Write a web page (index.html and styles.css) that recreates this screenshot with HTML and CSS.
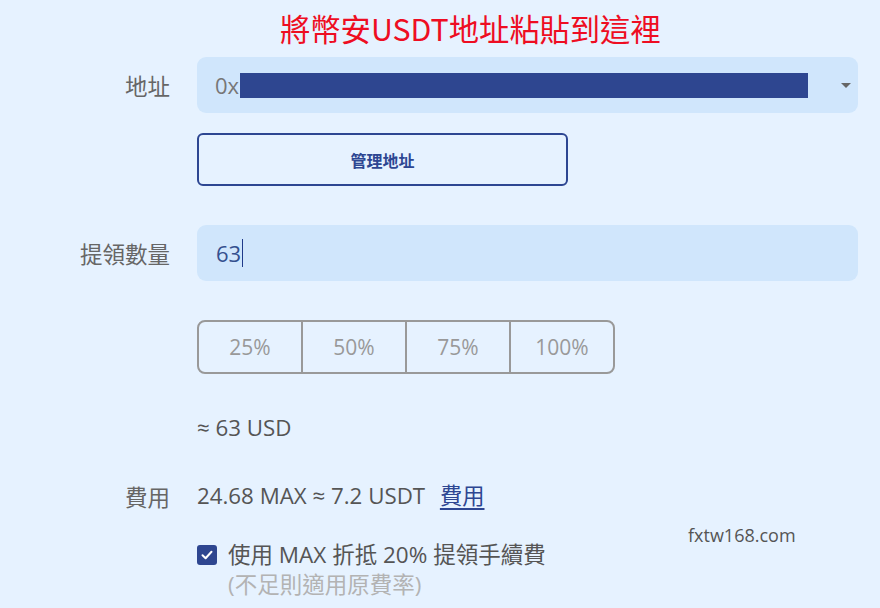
FILE: index.html
```html
<!DOCTYPE html>
<html lang="zh-Hant">
<head>
    <meta charset="UTF-8">
    <meta name="viewport" content="width=device-width, initial-scale=1.0">
    <link rel="stylesheet" href="styles.css">
</head>
<body>

<div class="page">
    <div class="title">將幣安USDT地址粘貼到這裡</div>

    <div class="form">
        <!-- address -->
        <div class="row row-address">
            <div class="label">地址</div>
            <div class="field select-box">
                <span class="select-text">0x</span><span class="redact"></span>
                <span class="caret"></span>
            </div>
        </div>

        <div class="row row-manage">
            <div class="label"></div>
            <div class="field">
                <button class="btn-manage">管理地址</button>
            </div>
        </div>

        <!-- amount -->
        <div class="row row-amount">
            <div class="label">提領數量</div>
            <div class="field input-box">
                <span class="input-text">63</span><span class="cursor"></span>
            </div>
        </div>

        <div class="row row-percent">
            <div class="label"></div>
            <div class="field">
                <div class="percent-group">
                    <button class="pct">25%</button>
                    <button class="pct">50%</button>
                    <button class="pct">75%</button>
                    <button class="pct">100%</button>
                </div>
            </div>
        </div>

        <div class="row row-usd">
            <div class="label"></div>
            <div class="field value">≈ 63 USD</div>
        </div>

        <!-- fee -->
        <div class="row row-fee">
            <div class="label">費用</div>
            <div class="field value">24.68 MAX ≈ 7.2 USDT <a class="fee-link" href="#">費用</a></div>
        </div>

        <div class="row row-check">
            <div class="label"></div>
            <div class="field check-field">
                <span class="checkbox">
                    <svg width="14" height="14" viewBox="0 0 14 14"><path d="M2.5 7.2 L5.6 10.2 L11.5 3.8" fill="none" stroke="#fff" stroke-width="2" stroke-linecap="round" stroke-linejoin="round"/></svg>
                </span>
                <div class="check-text">
                    <div class="check-main">使用 MAX 折抵 20% 提領手續費</div>
                    <div class="check-sub">(不足則適用原費率)</div>
                </div>
            </div>
        </div>
    </div>

    <div class="watermark">fxtw168.com</div>
</div>

</body>
</html>
```

FILE: styles.css
```css
body {
    margin: 0;
    padding: 0;
    background-color: #e6f2ff;
    font-family: "Open Sans", "Noto Sans CJK TC", sans-serif;
    color: #555;
    overflow: hidden;
}

.page {
    position: relative;
    width: 880px;
    height: 608px;
}

.title {
    height: 57px;
    line-height: 57px;
    padding-left: 280px;
    font-family: "Noto Sans CJK TC", sans-serif;
    font-size: 30.3px;
    color: #ee0d22;
    white-space: nowrap;
}

.row {
    display: flex;
    align-items: center;
}

.label {
    width: 170px;
    margin-right: 27px;
    flex-shrink: 0;
    text-align: right;
    font-size: 22.5px;
    color: #666;
}

.field {
    width: 661px;
}

.select-box,
.input-box {
    height: 56px;
    box-sizing: border-box;
    background-color: #d0e6fc;
    border-radius: 9px;
    display: flex;
    align-items: center;
    padding-left: 18px;
    font-size: 22px;
}

.select-text {
    color: #777;
}

.redact {
    display: inline-block;
    width: 568px;
    height: 25px;
    margin-left: 1px;
    background-color: #2e4690;
}

.caret {
    margin-left: auto;
    margin-right: 7px;
    width: 0;
    height: 0;
    border-left: 5px solid transparent;
    border-right: 5px solid transparent;
    border-top: 5px solid #666;
}

.row-manage {
    margin-top: 20px;
}

.btn-manage {
    width: 371px;
    height: 53px;
    background: transparent;
    border: 2px solid #2d4692;
    border-radius: 6px;
    color: #2d4692;
    font-family: "Noto Sans CJK TC", sans-serif;
    font-size: 16px;
    font-weight: 700;
    cursor: pointer;
}

.row-amount {
    margin-top: 39px;
}

.input-text {
    color: #34508f;
    padding-left: 1px;
}

.cursor {
    display: inline-block;
    width: 1px;
    height: 28px;
    margin-left: 1px;
    background-color: #1f3a8a;
}

.row-percent {
    margin-top: 39px;
}

.percent-group {
    display: flex;
    width: 418px;
    height: 54px;
    box-sizing: border-box;
    border: 2px solid #999;
    border-radius: 8px;
    overflow: hidden;
}

.pct {
    flex: 1;
    background: transparent;
    border: none;
    border-left: 2px solid #999;
    color: #999;
    font-family: "Open Sans", sans-serif;
    font-size: 21px;
    padding: 0;
}

.pct:first-child {
    border-left: none;
}

.value {
    font-size: 22.3px;
    line-height: 40px;
    color: #555;
    white-space: nowrap;
}

.row-usd {
    margin-top: 34px;
}

.row-fee {
    margin-top: 28px;
}

.fee-link {
    margin-left: 9px;
    color: #2d4692;
    text-decoration: underline;
    text-decoration-thickness: 2px;
    text-underline-offset: 4px;
}

.row-check {
    margin-top: 24px;
    align-items: flex-start;
}

.check-field {
    display: flex;
    align-items: flex-start;
}

.checkbox {
    width: 20px;
    height: 20px;
    margin-top: 5px;
    margin-right: 11px;
    border-radius: 3px;
    background-color: #2e4690;
    display: flex;
    align-items: center;
    justify-content: center;
    flex-shrink: 0;
}

.check-main {
    font-size: 22.5px;
    line-height: 30px;
    color: #555;
    white-space: nowrap;
}

.check-sub {
    font-size: 22.5px;
    line-height: 30px;
    color: #b3b3b3;
    white-space: nowrap;
}

.watermark {
    position: absolute;
    left: 688px;
    top: 522px;
    font-size: 18px;
    line-height: 26px;
    color: #555;
}
```
